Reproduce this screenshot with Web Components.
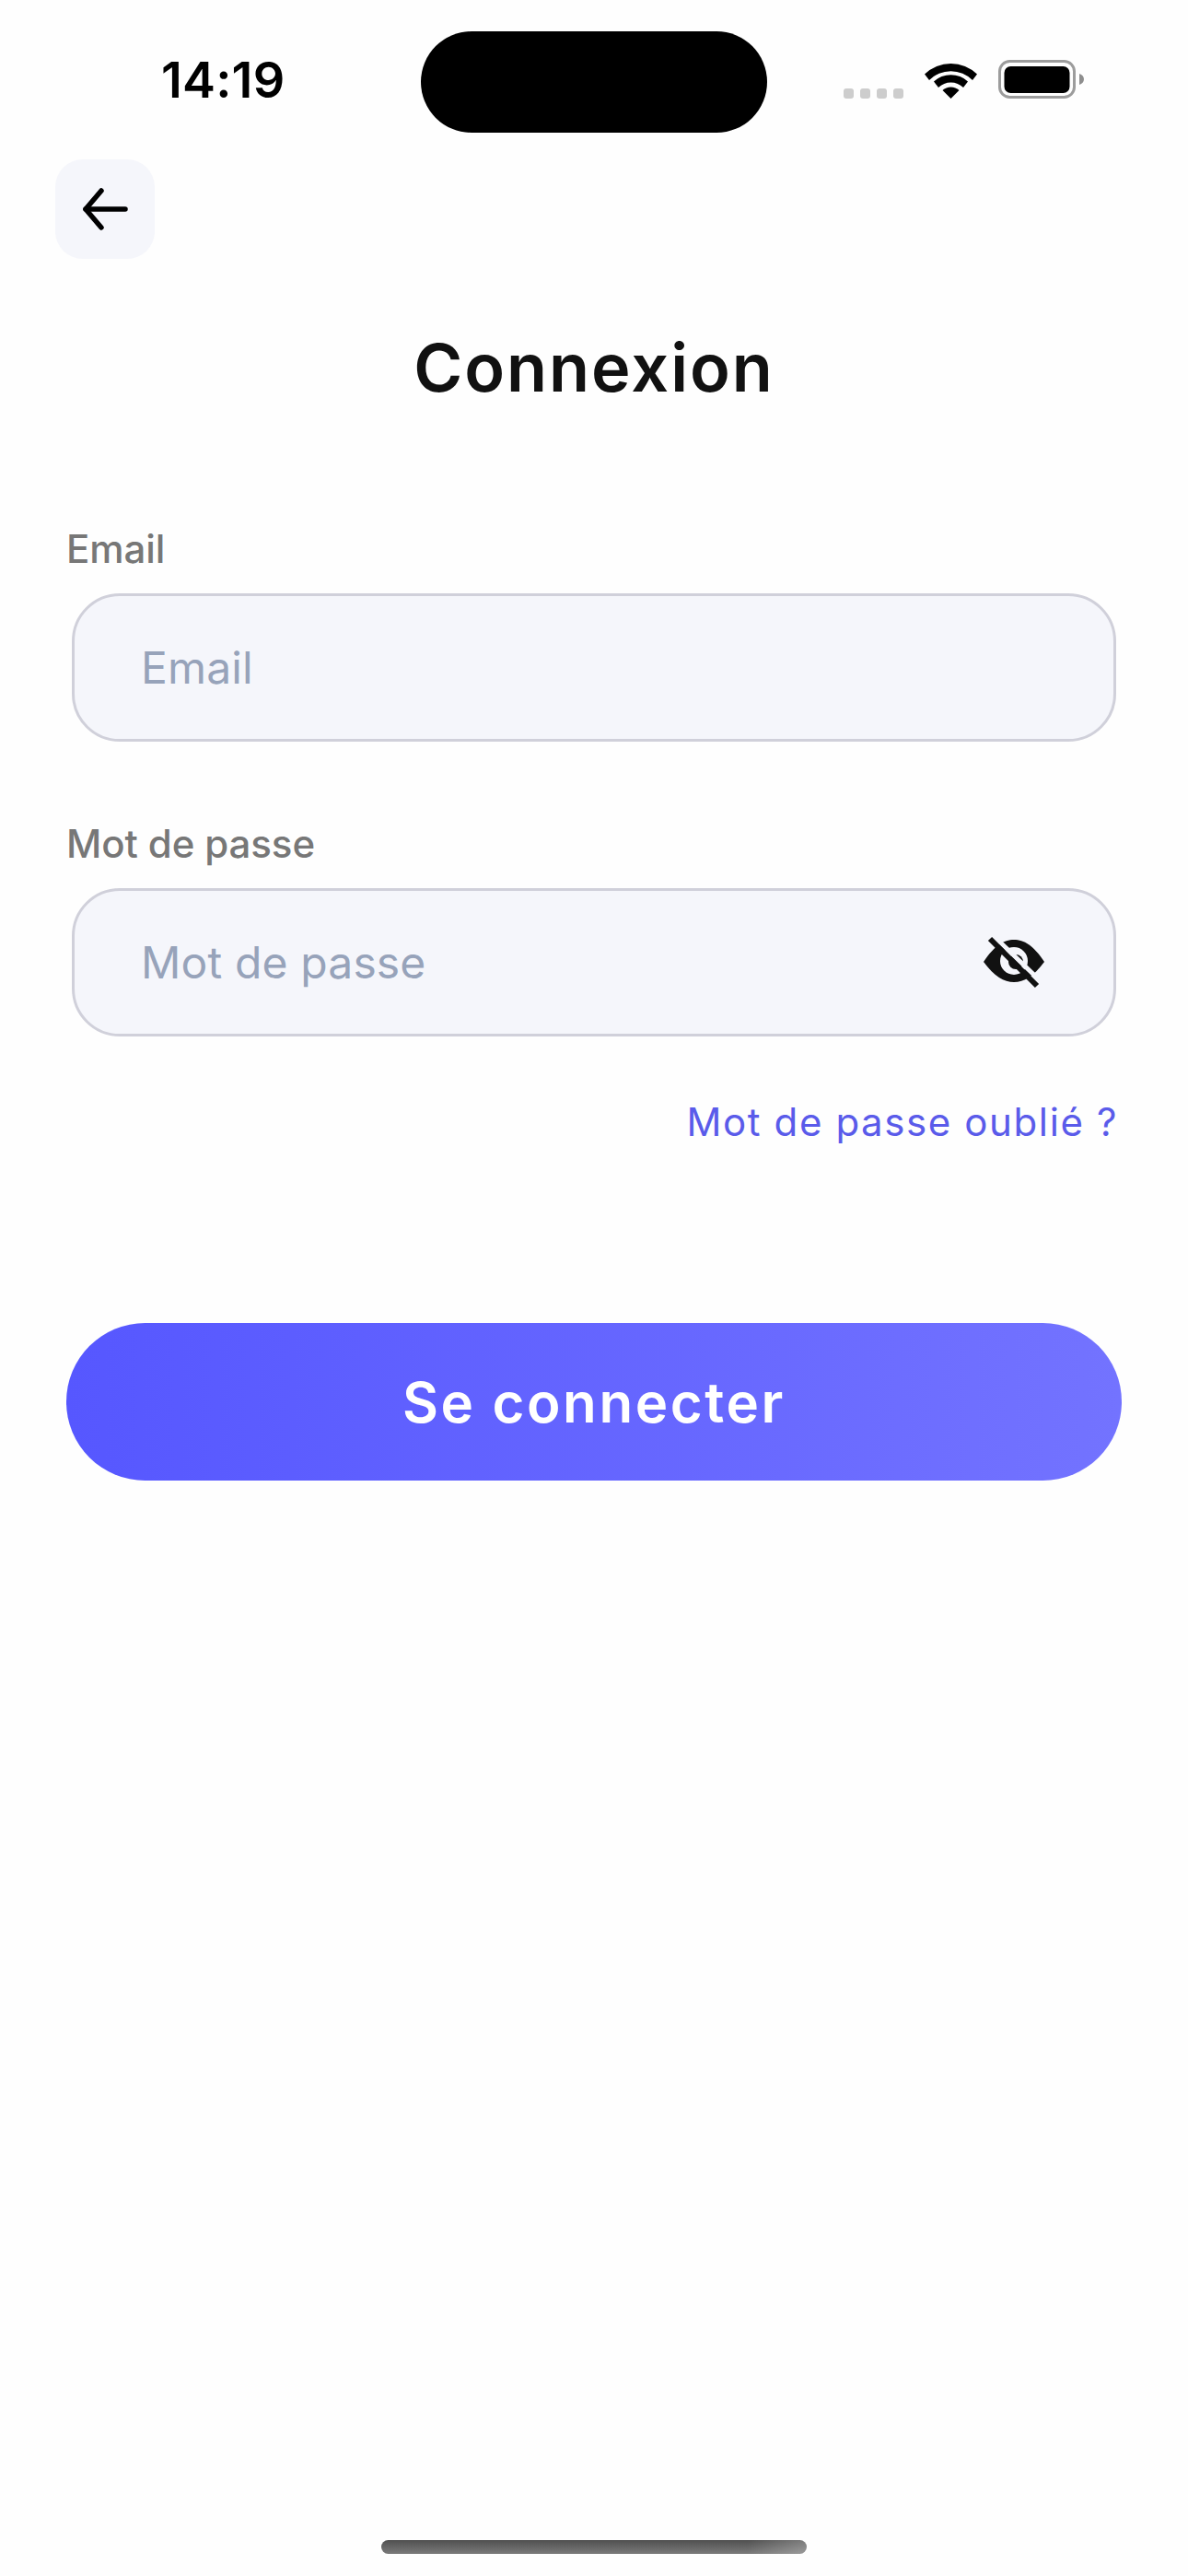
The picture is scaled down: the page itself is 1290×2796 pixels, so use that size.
<!DOCTYPE html>
<html lang="fr">
<head>
<meta charset="utf-8">
<title>Connexion</title>
<style>
  html, body { margin: 0; background: #fefefe; }
  body { font-family: Inter, "Liberation Sans", sans-serif; }
</style>
</head>
<body>
<login-screen>
  <status-bar slot="top" time="14:19"></status-bar>
  <back-button slot="top"></back-button>
  <page-title slot="top">Connexion</page-title>
  <form-field slot="form" label="Email" placeholder="Email"></form-field>
  <form-field slot="form" label="Mot de passe" placeholder="Mot de passe" secret></form-field>
  <text-link slot="form">Mot de passe oublié ?</text-link>
  <primary-button slot="form">Se connecter</primary-button>
</login-screen>

<script>
// status bar
const statusTpl = document.createElement('template');
statusTpl.innerHTML = `<style>
  :host { display: block; height: 173px; box-sizing: border-box; padding-top: 34px; }
  .row { display: flex; align-items: flex-start; height: 110px; }
  .time { width: 457px; flex: none; box-sizing: border-box; padding: 21px 0 0 175px; font: 600 54px/64px Inter, sans-serif; color: #000; letter-spacing: .2px; white-space: nowrap; }
  .island { width: 376px; height: 110px; border-radius: 55px; background: #000; flex: none; }
  .icons { display: flex; align-items: flex-end; margin: 31px 0 0 83px; height: 42px; }
  .dots { display: flex; gap: 7px; margin-right: 23px; }
  .dots i { width: 11px; height: 11px; border-radius: 3px; background: #cdcdcd; }
  svg { display: block; }
  .wifi { margin-right: 23px; }
</style>
<div class="row">
  <div class="time"></div>
  <div class="island"></div>
  <div class="icons">
    <div class="dots"><i></i><i></i><i></i><i></i></div>
    <svg class="wifi" width="57" height="42" viewBox="0 0 57 42">
      <path d="M0 15.5 A41 41 0 0 1 57 15.5 L52 22 A33 33 0 0 0 5 22 Z" fill="#000"/>
      <path d="M10 26.5 A27 27 0 0 1 47 26.5 L42 33 A19.5 19.5 0 0 0 15 33 Z" fill="#000" transform="translate(0 -3)"/>
      <path d="M19.5 33 A13 13 0 0 1 37.5 33 L28.5 42 Z" fill="#000"/>
    </svg>
    <svg width="93" height="42" viewBox="0 0 93 42">
      <rect x="1.5" y="1.5" width="81" height="39" rx="11" fill="none" stroke="#9c9c9c" stroke-width="3"/>
      <rect x="6.5" y="7" width="71" height="29" rx="7" fill="#000"/>
      <path d="M88 15 C91 16 93 18 93 21 C93 24 91 26 88 27 Z" fill="#8e8e8e"/>
    </svg>
  </div>
</div>`;
class StatusBar extends HTMLElement {
  constructor() {
    super();
    this.attachShadow({ mode: 'open' });
    this.shadowRoot.appendChild(statusTpl.content.cloneNode(true));
  }
  connectedCallback() {
    this.shadowRoot.querySelector('.time').textContent = this.getAttribute('time');
  }
}
customElements.define('status-bar', StatusBar);

// back button
const backTpl = document.createElement('template');
backTpl.innerHTML = `<style>
  :host { display: flex; width: 108px; height: 108px; margin-left: 60px; border-radius: 30px; background: #f5f6fb; align-items: center; justify-content: center; }
  svg { display: block; }
</style>
<svg width="52" height="46" viewBox="0 0 52 46" fill="none" stroke="#000" stroke-width="5.5" stroke-linecap="round" stroke-linejoin="round">
  <path d="M48 23 H5"/>
  <path d="M22 3 L5 23 L22 43"/>
</svg>`;
class BackButton extends HTMLElement {
  constructor() {
    super();
    this.attachShadow({ mode: 'open' });
    this.shadowRoot.appendChild(backTpl.content.cloneNode(true));
  }
}
customElements.define('back-button', BackButton);

// title
const titleTpl = document.createElement('template');
titleTpl.innerHTML = `<style>
  :host { display: block; margin-top: 74px; text-align: center; font: 600 72px/88px Inter, sans-serif; letter-spacing: 2px; color: #111; }
</style><slot></slot>`;
class PageTitle extends HTMLElement {
  constructor() {
    super();
    this.attachShadow({ mode: 'open' });
    this.shadowRoot.appendChild(titleTpl.content.cloneNode(true));
  }
}
customElements.define('page-title', PageTitle);

// label + input
const fieldTpl = document.createElement('template');
fieldTpl.innerHTML = `<style>
  :host { display: block; margin-bottom: 85px; }
  label { display: block; height: 74px; padding-left: 72px; font: 500 42px/52px Inter, sans-serif; letter-spacing: -.1px; color: #777; }
  .box { display: flex; align-items: center; justify-content: space-between; height: 161px; box-sizing: border-box; margin: 0 78px; padding: 0 75px 0 72px; border: 3px solid #d0d0da; border-radius: 52px; background: #f5f6fb; }
  .hint { font: 400 48px/60px Inter, sans-serif; color: #97a3ba; letter-spacing: .15px; }
  svg { display: none; }
  :host([secret]) svg { display: block; }
</style>
<label></label>
<div class="box">
  <span class="hint"></span>
  <svg width="66" height="57" viewBox="0 0 66 57">
    <path d="M0 28 C12 10 22 4 33 4 C44 4 54 10 66 28 C54 44 44 50 33 50 C22 50 12 44 0 28 Z" fill="#111"/>
    <circle cx="33" cy="27" r="15" fill="#f5f6fb"/>
    <circle cx="35" cy="28" r="8" fill="#111"/>
    <path d="M9 4 L60 53" stroke="#f5f6fb" stroke-width="5" transform="translate(3 -3)"/>
    <path d="M7 3 L58 54" stroke="#111" stroke-width="6"/>
  </svg>
</div>`;
class FormField extends HTMLElement {
  constructor() {
    super();
    this.attachShadow({ mode: 'open' });
    this.shadowRoot.appendChild(fieldTpl.content.cloneNode(true));
  }
  connectedCallback() {
    this.shadowRoot.querySelector('label').textContent = this.getAttribute('label');
    this.shadowRoot.querySelector('.hint').textContent = this.getAttribute('placeholder');
  }
}
customElements.define('form-field', FormField);

// forgot password link
const linkTpl = document.createElement('template');
linkTpl.innerHTML = `<style>
  :host { display: block; margin-top: -18px; padding-right: 76px; text-align: right; font: 400 42px/52px Inter, sans-serif; letter-spacing: 1.6px; color: #5a5bea; }
</style><slot></slot>`;
class TextLink extends HTMLElement {
  constructor() {
    super();
    this.attachShadow({ mode: 'open' });
    this.shadowRoot.appendChild(linkTpl.content.cloneNode(true));
  }
}
customElements.define('text-link', TextLink);

// main button
const btnTpl = document.createElement('template');
btnTpl.innerHTML = `<style>
  :host { display: flex; align-items: center; justify-content: center; height: 171px; margin: 192px 72px 0 72px; border-radius: 86px; background: linear-gradient(90deg, #5657ff, #7373ff); color: #fff; font: 600 60px/72px Inter, sans-serif; letter-spacing: 2.6px; }
</style><slot></slot>`;
class PrimaryButton extends HTMLElement {
  constructor() {
    super();
    this.attachShadow({ mode: 'open' });
    this.shadowRoot.appendChild(btnTpl.content.cloneNode(true));
  }
}
customElements.define('primary-button', PrimaryButton);

// home bar at the bottom
const homeTpl = document.createElement('template');
homeTpl.innerHTML = `<style>
  :host { display: block; width: 462px; height: 15px; margin: 0 auto 24px; border-radius: 8px; background: linear-gradient(90deg, transparent 86%, rgba(255,255,255,.25)), linear-gradient(180deg, #505050, #7a7a7a); }
</style>`;
class HomeIndicator extends HTMLElement {
  constructor() {
    super();
    this.attachShadow({ mode: 'open' });
    this.shadowRoot.appendChild(homeTpl.content.cloneNode(true));
  }
}
customElements.define('home-indicator', HomeIndicator);

// whole screen
const screenTpl = document.createElement('template');
screenTpl.innerHTML = `<style>
  :host { display: flex; flex-direction: column; width: 1290px; height: 2796px; overflow: hidden; }
  .form { margin-top: 127px; flex: 1; }
  home-indicator { flex: none; }
</style>
<slot name="top"></slot>
<div class="form"><slot name="form"></slot></div>
<home-indicator></home-indicator>`;
class LoginScreen extends HTMLElement {
  constructor() {
    super();
    this.attachShadow({ mode: 'open' });
    this.shadowRoot.appendChild(screenTpl.content.cloneNode(true));
  }
}
customElements.define('login-screen', LoginScreen);
</script>
</body>
</html>
